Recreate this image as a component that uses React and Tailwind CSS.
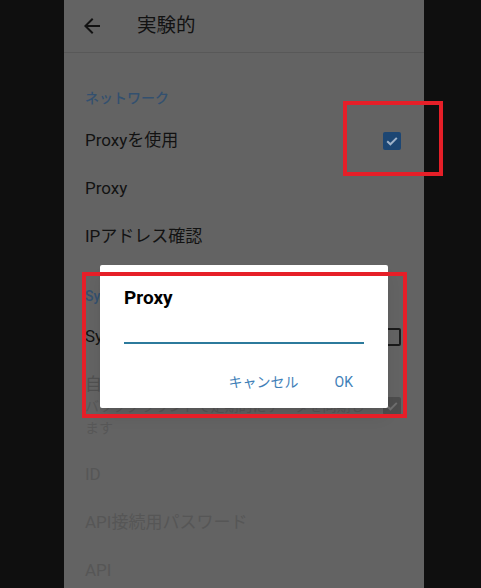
const font = "font-['Roboto','Noto_Sans_CJK_JP',sans-serif]";

function Check({ className }) {
  return (
    <svg viewBox="0 0 18 18" className={className}>
      <path d="M4.2 9.2l3.2 3.1 6.4-6.4" fill="none" stroke="currentColor" strokeWidth="2" />
    </svg>
  );
}

function Row({ title, disabled, children }) {
  return (
    <div className="h-[48px] flex items-center justify-between pl-[21px] pr-[23px]">
      <span className={`text-[17px] ${disabled ? 'text-[#565656]' : 'text-[#121212]'}`}>{title}</span>
      {children}
    </div>
  );
}

function Category({ label, className }) {
  return (
    <div className={`pl-[21px] text-[14px] leading-[17px] font-medium text-[#33506f] ${className}`}>
      {label}
    </div>
  );
}

export default function App() {
  return (
    <div className={`w-[481px] h-[588px] bg-[#0f0f0f] pl-[64px] overflow-hidden ${font}`}>
      <div className="relative w-[360px] h-full bg-[#636363] overflow-hidden">
        {/* Toolbar */}
        <div className="h-[53px] flex items-center border-b border-[#585858]">
          <svg viewBox="0 0 24 24" className="w-[24px] h-[24px] ml-[16px] text-[#121212]">
            <path fill="currentColor" d="M20 11H7.83l5.59-5.59L12 4l-8 8 8 8 1.41-1.41L7.83 13H20v-2z" />
          </svg>
          <span className="ml-[33px] text-[19.5px] text-[#121212]">実験的</span>
        </div>

        {/* Preferences */}
        <Category label="ネットワーク" className="pt-[37px] pb-[10px]" />
        <Row title="Proxyを使用">
          <div className="w-[18px] h-[18px] rounded-[2px] bg-[#1c4673] text-[#9fb2c8] flex items-center justify-center">
            <Check className="w-[18px] h-[18px]" />
          </div>
        </Row>
        <Row title="Proxy" />
        <Row title="IPアドレス確認" />

        <Category label="Sync" className="pt-[27px] pb-[8px]" />
        <Row title="Syncを使用">
          <div className="w-[18px] h-[18px] rounded-[2px] border-2 border-[#1a1a1a]" />
        </Row>
        <div className="h-[90px] flex items-center justify-between pl-[21px] pr-[23px]">
          <div className="flex flex-col">
            <span className="text-[17px] leading-[22px] text-[#505050]">自動同期</span>
            <span className="text-[14px] leading-[22px] text-[#575757]">
              バックグラウンドで定期的にデータを同期し
              <br />
              ます
            </span>
          </div>
          <div className="w-[18px] h-[18px] rounded-[2px] bg-[#4d4d4d] text-[#6e6e6e] flex items-center justify-center">
            <Check className="w-[18px] h-[18px]" />
          </div>
        </div>
        <Row title="ID" disabled />
        <Row title="API接続用パスワード" disabled />
        <Row title="API" disabled />

        {/* Dialog */}
        <div className="absolute left-[36px] top-[265px] w-[288px] h-[143px] bg-white rounded-[2px] shadow-lg px-[24px]">
          <div className="pt-[21px] text-[19px] leading-[24px] font-bold text-black">Proxy</div>
          <div className="mt-[32px] h-[2px] bg-[#2c7a9c]" />
          <div className="flex justify-end items-center gap-[36px] mt-[28px] pr-[11px] text-[14px] text-[#3f7fb8]">
            <span>キャンセル</span>
            <span>OK</span>
          </div>
        </div>
      </div>

      {/* Annotation boxes */}
      <div className="absolute left-[343px] top-[101px] w-[100px] h-[75px] border-4 border-[#e61f28]" />
      <div className="absolute left-[82px] top-[272px] w-[325px] h-[146px] border-4 border-[#e61f28]" />
    </div>
  );
}
